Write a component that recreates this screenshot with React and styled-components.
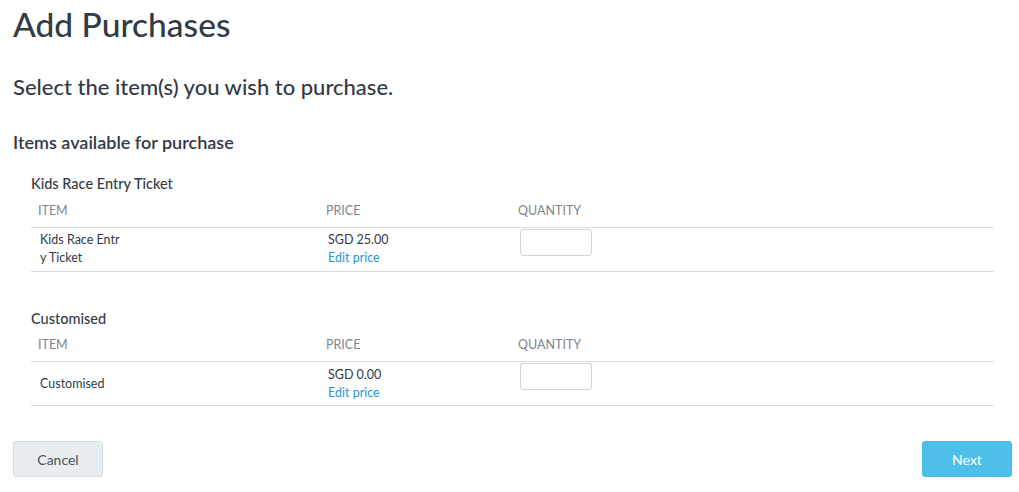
import React from 'react';
import styled, { createGlobalStyle } from 'styled-components';

const GlobalStyle = createGlobalStyle`
  body {
    margin: 0;
    background: #fff;
    font-family: Lato, "Open Sans", sans-serif;
    color: #323a45;
  }
  * { box-sizing: border-box; }
`;

const Page = styled.div`
  padding: 0 7px 0 13px;
`;

const Title = styled.h1`
  margin: 0;
  padding-top: 4px;
  font-size: 33.5px;
  line-height: 40px;
  font-weight: 500;
`;

const Subtitle = styled.h2`
  margin: 30px 0 0;
  font-size: 22px;
  line-height: 26px;
  font-weight: 500;
`;

const SectionTitle = styled.h3`
  margin: 30px 0 0;
  font-size: 18px;
  line-height: 24px;
  font-weight: 600;
`;

const Group = styled.div`
  margin: ${p => (p.$first ? '21px' : '38px')} 18px 0 18px;
`;

const GroupName = styled.div`
  font-size: 14.5px;
  line-height: 18px;
  font-weight: 500;
`;

const Table = styled.table`
  width: 100%;
  border-collapse: collapse;
  margin-top: 9px;
  font-size: 12.5px;
`;

const Th = styled.th`
  text-align: left;
  font-weight: 400;
  text-transform: uppercase;
  color: #7d848c;
  padding: 0 7px 8px;
  height: 25px;
  border-bottom: 1px solid #dcdcdc;
  width: ${p => p.$w || 'auto'};
`;

const Td = styled.td`
  padding: 2px 9px;
  height: 44px;
  vertical-align: middle;
  border-bottom: 1px solid #dcdcdc;
  line-height: 18px;
`;

const ItemName = styled.div`
  width: 80px;
  word-break: break-all;
`;

const EditLink = styled.a`
  display: block;
  color: #2a95d3;
  text-decoration: none;
  cursor: pointer;
`;

const QtyInput = styled.input`
  display: block;
  width: 72px;
  height: 27px;
  border: 1px solid #d4d4d4;
  border-radius: 3px;
  margin-top: -14px;
`;

const Footer = styled.div`
  display: flex;
  justify-content: space-between;
  margin-top: 35px;
`;

const Button = styled.button`
  width: 90px;
  height: 36px;
  border-radius: 3px;
  font-family: inherit;
  font-size: 14px;
  cursor: pointer;
  border: 1px solid ${p => (p.$primary ? '#47bbe6' : '#d5dde2')};
  background: ${p => (p.$primary ? '#4dbfe9' : '#e7edf0')};
  color: ${p => (p.$primary ? '#fff' : '#4a5562')};
`;

const groups = [
  { name: 'Kids Race Entry Ticket', item: 'Kids Race Entry Ticket', price: 'SGD 25.00' },
  { name: 'Customised', item: 'Customised', price: 'SGD 0.00' },
];

export default function App() {
  return (
    <Page>
      <GlobalStyle />
      <Title>Add Purchases</Title>
      <Subtitle>Select the item(s) you wish to purchase.</Subtitle>
      <SectionTitle>Items available for purchase</SectionTitle>
      {groups.map((g, i) => (
        <Group key={g.name} $first={i === 0}>
          <GroupName>{g.name}</GroupName>
          <Table>
            <thead>
              <tr>
                <Th $w="288px">Item</Th>
                <Th $w="192px">Price</Th>
                <Th>Quantity</Th>
              </tr>
            </thead>
            <tbody>
              <tr>
                <Td><ItemName>{g.item}</ItemName></Td>
                <Td>
                  <div>{g.price}</div>
                  <EditLink>Edit price</EditLink>
                </Td>
                <Td><QtyInput type="text" /></Td>
              </tr>
            </tbody>
          </Table>
        </Group>
      ))}
      <Footer>
        <Button>Cancel</Button>
        <Button $primary>Next</Button>
      </Footer>
    </Page>
  );
}
